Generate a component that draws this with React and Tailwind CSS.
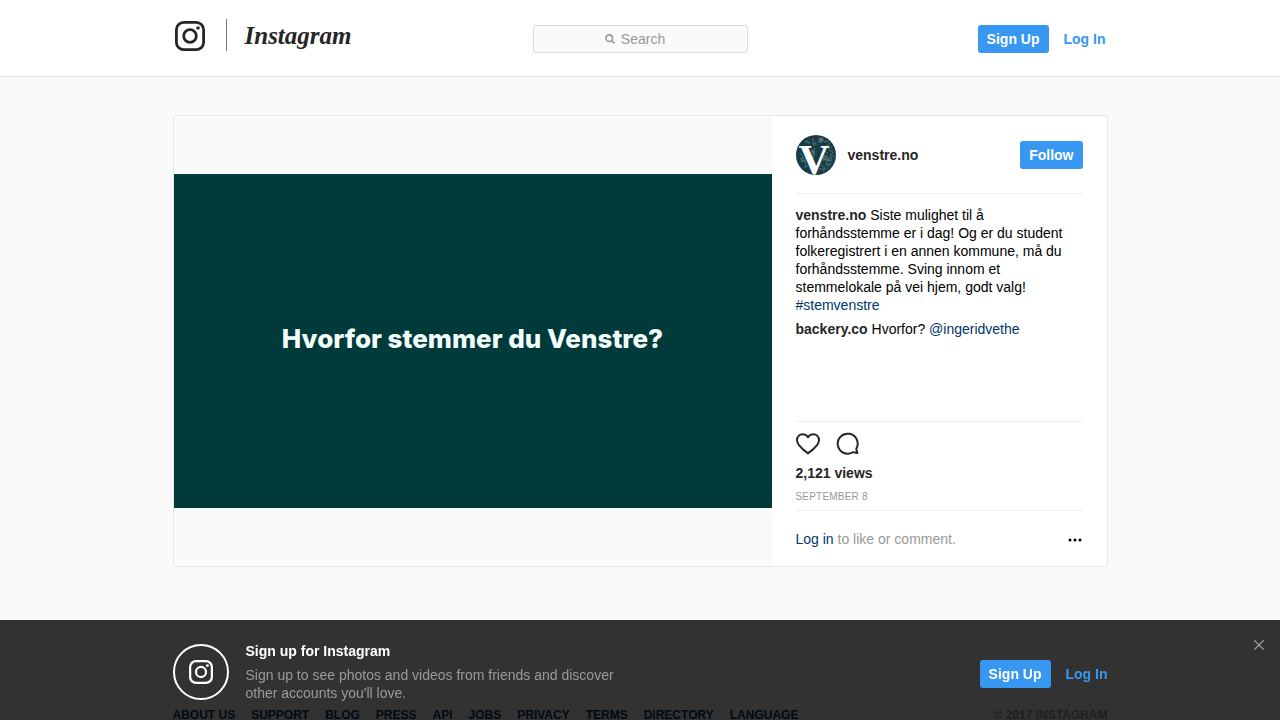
import React, { useState } from 'react';

const footerLinks = ['About us', 'Support', 'Blog', 'Press', 'API', 'Jobs', 'Privacy', 'Terms', 'Directory', 'Language'];

const CameraIcon = ({ className }) => (
    <svg viewBox="0 0 30 30" className={className} fill="none" stroke="currentColor" strokeWidth="2.8" aria-hidden="true">
        <rect x="1.4" y="1.4" width="27.2" height="27.2" rx="7.4" />
        <circle cx="15" cy="15" r="6.3" />
        <circle cx="23" cy="7" r="1.8" fill="currentColor" stroke="none" />
    </svg>
);

const HeartIcon = () => (
    <svg viewBox="0 0 24 24" className="size-6" fill="none" stroke="currentColor" strokeWidth="2" strokeLinejoin="round" aria-hidden="true">
        <path d="M12 21.4C9 19 1 13.6 1 8.2C1 4.8 3.5 2.2 6.6 2.2C9.2 2.2 10.9 3.2 12 5.2C13.1 3.2 14.8 2.2 17.4 2.2C20.5 2.2 23 4.8 23 8.2C23 13.6 15 19 12 21.4Z" />
    </svg>
);

const CommentIcon = () => (
    <svg viewBox="0 0 24 24" className="size-6" fill="none" stroke="currentColor" strokeWidth="2" strokeLinejoin="round" aria-hidden="true">
        <path d="M20.4 16.6A10 10 0 1 0 16.6 20.4C18.4 19.8 19.6 21.4 21.4 21C20.8 19.6 20.2 18.2 20.4 16.6Z" />
    </svg>
);

const Avatar = () => (
    <svg viewBox="0 0 40 40" className="size-10 shrink-0 rounded-full" role="img" aria-label="venstre.no profile picture">
        <rect width="40" height="40" fill="#183d47" />
        <g fill="none" stroke="#6d8b93" strokeWidth="0.8" opacity="0.8">
            <path d="M8 7h6M10 5l4 4M17 3v6h4M23 8l3-5M34 8l-4 3M15 14l3 4-2 5M19 13l-2 6h4M14 20l4 2-2 4M33 15l4 2-3 4h4M31 20v5l5 1M27 25h5l-2 5h5M25 30l4 3-2 4M23 34h5M32 30l3-2M4 18l3 4-3 2M5 27l4-2 1 6M8 32l4-1M29 16l3 3M20 7l-3 4M28 7l5-1M36 12l-4 2M30 35l3-3M27 20l3 2-3 2" />
            <circle cx="25" cy="5" r="2.2" fill="#5c7780" />
            <circle cx="29" cy="23" r="1.6" />
            <circle cx="34" cy="24" r="1.5" />
            <circle cx="7" cy="25" r="1.6" />
            <circle cx="17" cy="17" r="1.4" />
        </g>
        <text x="18" y="39" textAnchor="middle" fill="#fff" fontFamily="Liberation Serif, serif" fontWeight="bold" fontSize="43">V</text>
    </svg>
);

const BlueButton = ({ children }) => (
    <button type="button" className="h-7 rounded-[3px] bg-[#3897f0] px-[9px] font-semibold text-white">
        {children}
    </button>
);

const Header = () => (
    <header className="border-b border-[#e6e6e6] bg-white">
        <div className="mx-auto flex h-[76px] max-w-[935px] items-center justify-between">
            <a href="#" aria-label="Instagram" className="flex flex-1 items-center pb-1 pl-0.5">
                <CameraIcon className="size-[30px]" />
                <span className="mr-[18px] mb-0.5 ml-[21px] h-8 w-px bg-[#777]" />
                <span className="font-['Liberation_Serif',serif] text-[25px] leading-8 font-bold italic">Instagram</span>
            </a>
            <label className="relative block w-[215px] pt-0.5">
                <span className="sr-only">Search</span>
                <input
                    type="text"
                    placeholder="Search"
                    className="block h-7 w-full rounded-[3px] border border-[#dbdbdb] bg-[#fafafa] pl-1.5 text-center text-[#262626] outline-none placeholder:text-[#999]"
                />
                <svg viewBox="0 0 10 10" className="absolute top-[11px] left-[72px] size-2.5" fill="none" stroke="#999" strokeWidth="1.6" aria-hidden="true">
                    <circle cx="4.2" cy="4.2" r="3.3" />
                    <path d="M6.7 6.7L9.5 9.5" />
                </svg>
            </label>
            <div className="flex flex-1 items-center justify-end gap-[15px] pt-0.5 pr-0.5">
                <BlueButton>Sign Up</BlueButton>
                <a href="#" className="font-semibold text-[#3897f0]">Log In</a>
            </div>
        </div>
    </header>
);

const Post = () => (
    <article className="flex rounded-[3px] border border-[#e6e6e6] bg-white">
        <div className="flex flex-1 items-center bg-[#fafafa]">
            <div className="flex aspect-[598/334] w-full items-center justify-center bg-[#003a3a] pb-1 font-['Inter',sans-serif] text-[26px] leading-8 font-extrabold text-[#f4fffd]">
                Hvorfor stemmer du Venstre?
            </div>
        </div>

        <div className="flex min-h-[450px] w-[335px] flex-col px-6">
            <div className="flex h-[78px] items-center border-b border-[#efefef]">
                <Avatar />
                <a href="#" className="ml-3 flex-1 font-semibold">venstre.no</a>
                <BlueButton>Follow</BlueButton>
            </div>

            <ul className="flex-1 space-y-1.5 pt-3 text-black">
                <li>
                    <a href="#" className="font-semibold text-[#262626]">venstre.no</a> Siste mulighet til å forhåndsstemme er i dag! Og er du student folkeregistrert i en annen kommune, må du forhåndsstemme. Sving innom et stemmelokale på vei hjem, godt valg!{' '}
                    <a href="#" className="text-[#003569]">#stemvenstre</a>
                </li>
                <li>
                    <a href="#" className="font-semibold text-[#262626]">backery.co</a> Hvorfor? <a href="#" className="text-[#003569]">@ingeridvethe</a>
                </li>
            </ul>

            <div className="border-t border-[#efefef] pt-2.5">
                <div className="flex gap-4">
                    <button type="button" aria-label="Like"><HeartIcon /></button>
                    <button type="button" aria-label="Comment"><CommentIcon /></button>
                </div>
                <p className="mt-2 font-semibold">2,121 views</p>
                <time className="mt-1.5 mb-1 block text-[10px] tracking-[0.2px] text-[#999] uppercase">September 8</time>
            </div>

            <div className="flex h-14 items-center justify-between border-t border-[#efefef]">
                <p className="text-[#999]"><a href="#" className="text-[#003569]">Log in</a> to like or comment.</p>
                <button type="button" aria-label="More options">
                    <svg viewBox="0 0 16 16" className="size-4" fill="#000" aria-hidden="true">
                        <circle cx="3" cy="9" r="1.5" />
                        <circle cx="8" cy="9" r="1.5" />
                        <circle cx="13" cy="9" r="1.5" />
                    </svg>
                </button>
            </div>
        </div>
    </article>
);

const SignUpBanner = ({ onClose }) => (
    <aside className="fixed inset-x-0 bottom-0 bg-black/80">
        <div className="mx-auto flex h-[100px] max-w-[935px] items-center">
            <div className="mt-1 flex size-14 shrink-0 items-center justify-center rounded-full border-2 border-white text-white">
                <CameraIcon className="size-6" />
            </div>
            <div className="mt-1 ml-[17px] w-[400px]">
                <h2 className="mb-1.5 font-semibold text-white">Sign up for Instagram</h2>
                <p className="text-[#999]">Sign up to see photos and videos from friends and discover other accounts you'll love.</p>
            </div>
            <div className="mt-2 ml-auto flex items-center gap-[15px]">
                <BlueButton>Sign Up</BlueButton>
                <a href="#" className="font-semibold text-[#3897f0]">Log In</a>
            </div>
        </div>
        <button type="button" aria-label="Close" onClick={onClose} className="absolute top-5 right-4 text-[#999]">
            <svg viewBox="0 0 10 10" className="size-2.5" fill="none" stroke="currentColor" strokeWidth="1.3" aria-hidden="true">
                <path d="M0.3 0.3L9.7 9.7M9.7 0.3L0.3 9.7" />
            </svg>
        </button>
    </aside>
);

const App = () => {
    const [showBanner, setShowBanner] = useState(true);

    return (
        <div className="min-h-screen bg-[#fafafa] font-['Liberation_Sans',Arial,sans-serif] text-[14px] leading-[18px] text-[#262626]">
            <Header />
            <main className="mx-auto max-w-[935px] pt-[38px] pb-[101px]">
                <Post />
            </main>
            <footer className="mx-auto flex max-w-[935px] justify-between py-[38px] text-[12px] font-semibold uppercase">
                <nav className="flex gap-4 text-[#003569]">
                    {footerLinks.map(link => <a key={link} href="#">{link}</a>)}
                </nav>
                <span className="text-[#999]">© 2017 Instagram</span>
            </footer>
            {showBanner && <SignUpBanner onClose={() => setShowBanner(false)} />}
        </div>
    );
};

export default App;
